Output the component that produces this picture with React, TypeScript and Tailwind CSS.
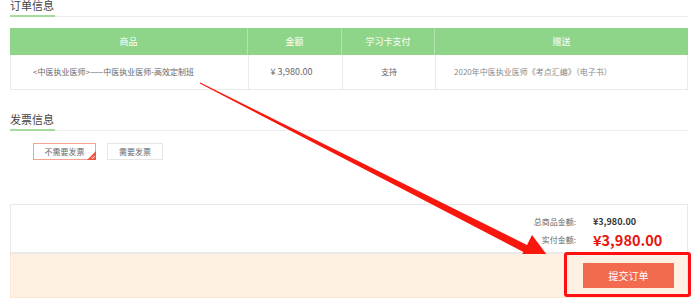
import type { ReactNode } from 'react'

function SectionTitle({ children, className = '' }: { children: ReactNode; className?: string }) {
  return (
    <div className={`flex border-b border-[#ececec] ${className}`}>
      <span className="-mb-px block w-[45px] border-b-2 border-[#a3dc9c] pb-[4px] text-[11px] leading-[12px] text-[#444]">
        {children}
      </span>
    </div>
  )
}

const cols = 'grid grid-cols-[238px_94px_93px_253px]'

export default function App() {
  return (
    <div className="relative h-[306px] w-[700px] overflow-hidden bg-white font-['Noto_Sans_CJK_SC',sans-serif]">
      {/* annotation arrow — sits under the peach bar */}
      <svg className="pointer-events-none absolute left-0 top-0 z-0" width="700" height="306" viewBox="0 0 700 306">
        <polygon
          points="200.2,82.6 527,245 532,235 553,263 518,262 523.4,252 199.8,83.4"
          fill="#f8170c"
        />
      </svg>

      <div className="ml-[10px] w-[678px]">
        {/* 订单信息 */}
        <SectionTitle className="-mt-[1px]">订单信息</SectionTitle>

        <div className="mt-[11px]">
          <div className={`${cols} h-[27px] bg-[#8ed589] text-[9px] text-white`}>
            <div className="flex items-center justify-center border-r border-[#b4e4ae]">商品</div>
            <div className="flex items-center justify-center border-r border-[#b4e4ae]">金额</div>
            <div className="flex items-center justify-center border-r border-[#b4e4ae]">学习卡支付</div>
            <div className="flex items-center justify-center">赠送</div>
          </div>
          <div className={`${cols} h-[35px] border-x border-b border-[#e4eee2] text-[8px] text-[#666]`}>
            <div className="flex items-center border-r border-[#e4eee2] pl-[22px]">
              &lt;中医执业医师&gt;——中医执业医师-高效定制班
            </div>
            <div className="flex items-center justify-center border-r border-[#e4eee2] pr-[8px] text-[9px]">¥ 3,980.00</div>
            <div className="flex items-center justify-center border-r border-[#e4eee2]">支持</div>
            <div className="flex items-center pl-[18px] text-[#888]">2020年中医执业医师《考点汇编》（电子书）</div>
          </div>
        </div>

        {/* 发票信息 */}
        <SectionTitle className="mt-[23px]">发票信息</SectionTitle>

        <div className="mt-[12px] flex gap-[11px] pl-[23px] text-[8px] text-[#666]">
          <button className="relative flex h-[17px] w-[63px] items-center justify-center border border-[#f4a392] bg-white">
            不需要发票
            <svg className="absolute -bottom-px -right-px" width="9" height="9" viewBox="0 0 9 9">
              <polygon points="9,0 9,9 0,9" fill="#f2553f" />
              <path d="M4.6 6.4 L5.8 7.5 L7.8 5" stroke="#fff" strokeWidth="0.9" fill="none" />
            </svg>
          </button>
          <button className="flex h-[17px] w-[56px] items-center justify-center border border-[#e6e6e6] bg-white">
            需要发票
          </button>
        </div>

        {/* 结算 */}
        <div className="mt-[44px] flex h-[50px] flex-col items-end gap-[2px] border border-b-2 border-[#e9e9e9] pr-[24px] pt-[11px]">
          <div className="flex h-[12px] items-center">
            <span className="w-[60px] text-right text-[8px] text-[#666]">总商品金额:</span>
            <span className="ml-[17px] w-[70px] text-[9px] font-bold text-[#333]">¥3,980.00</span>
          </div>
          <div className="flex h-[20px] items-center">
            <span className="w-[60px] text-right text-[8px] text-[#666]">实付金额:</span>
            <span className="ml-[17px] w-[70px] text-[14.5px] font-bold leading-[20px] text-[#e8140c]">¥3,980.00</span>
          </div>
        </div>
        <div className="relative z-10 flex h-[44px] items-center justify-end border-x border-b border-[#fde6d3] bg-[#fef0e3] pr-[13px]">
          <button className="flex h-[25px] w-[91px] items-center justify-center bg-[#f26b4e] text-[10px] text-white">
            提交订单
          </button>
        </div>
      </div>

      <div className="pointer-events-none absolute left-[564px] top-[252px] z-20 h-[45px] w-[127px] rounded-[3px] border-[3px] border-[#ff1010]" />
    </div>
  )
}
